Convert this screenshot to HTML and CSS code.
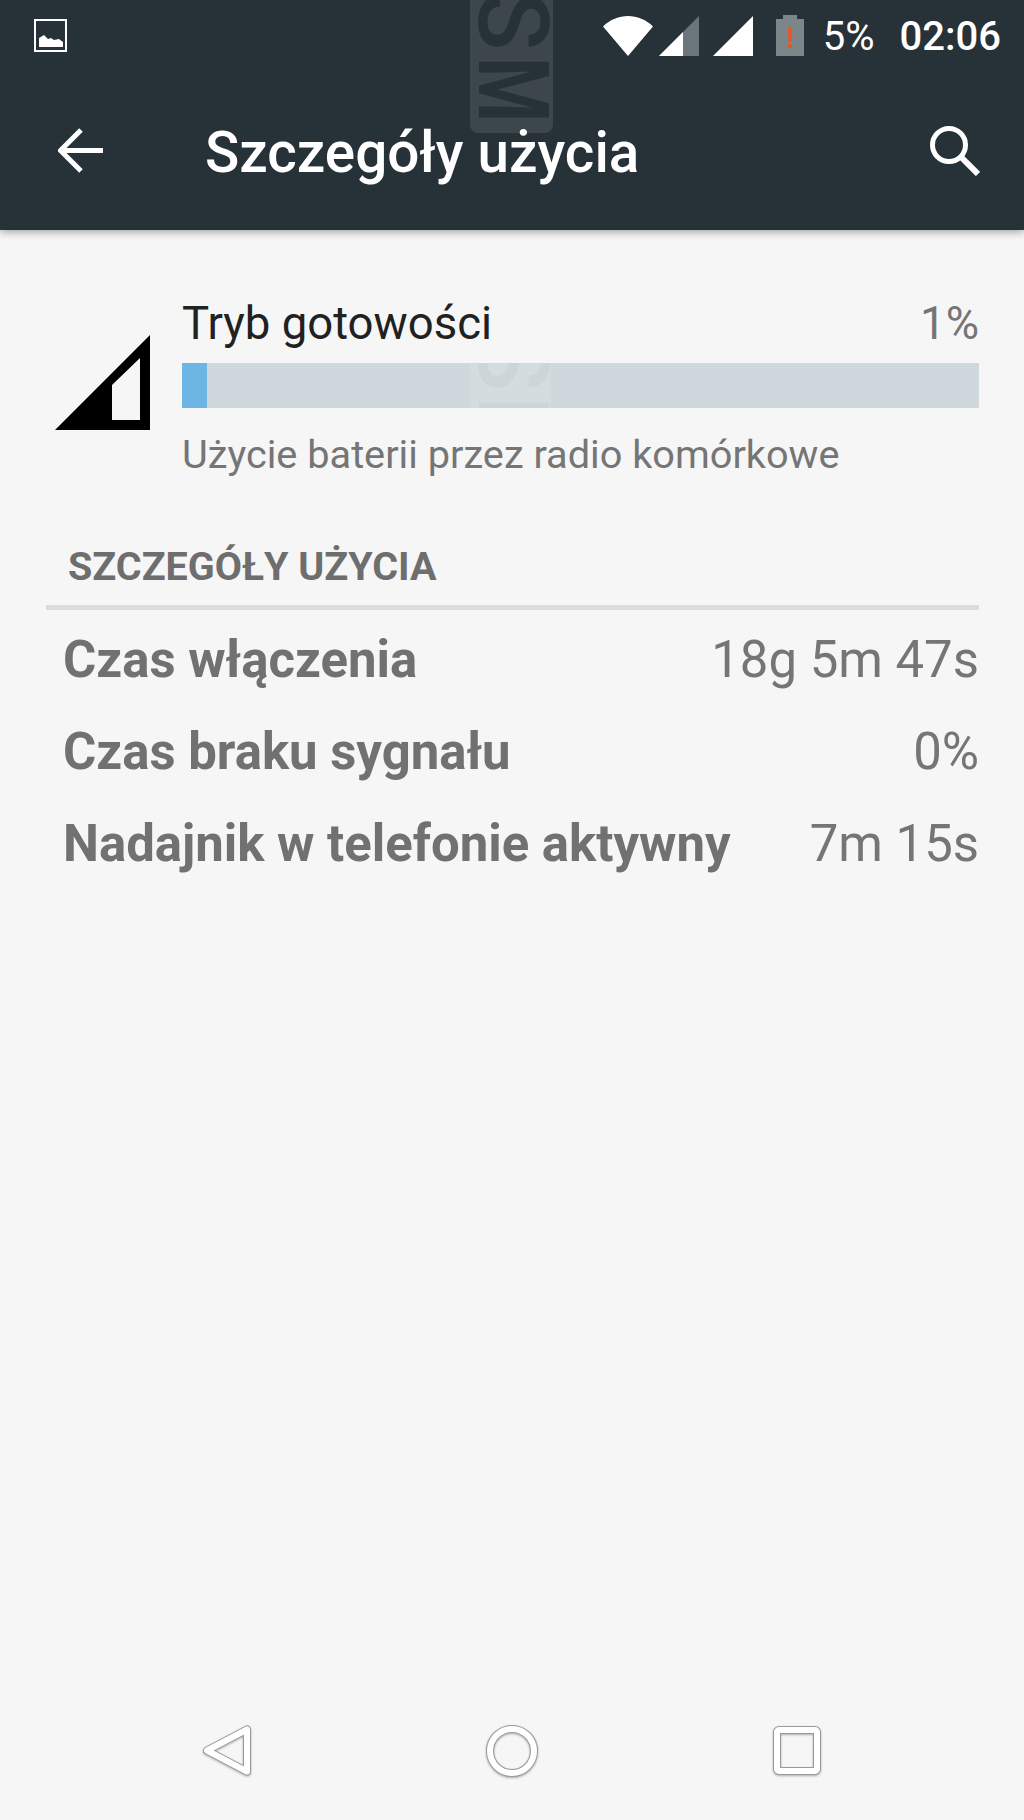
FILE: index.html
```html
<!DOCTYPE html>
<html lang="pl">
<head>
    <meta charset="UTF-8">
    <meta name="viewport" content="width=device-width, initial-scale=1.0">
    <title>Szczegóły użycia</title>
    <link rel="stylesheet" href="styles.css">
</head>
<body>
    <header class="app-header">
        <!-- Znak wodny -->
        <div class="mark"><span class="mark-s">S</span><span class="mark-m">M</span></div>

        <div class="status-bar">
            <svg class="status-image" width="33" height="33" viewBox="0 0 33 33">
                <rect x="1" y="1" width="31" height="31" fill="none" stroke="#fff" stroke-width="2"/>
                <path d="M5 28V19L10 16L14 20L17 19L20 21L25 20L29 23V28Z" fill="#fff"/>
            </svg>
            <div class="status-right">
                <svg class="status-wifi" width="50" height="40" viewBox="0 0 50 40">
                    <path d="M0 10.500C14 -3.500 36 -3.500 50 10.500L25 40Z" fill="#fff"/>
                </svg>
                <svg class="status-signal" width="40" height="40" viewBox="0 0 40 40">
                    <path d="M0 40L40 0V40Z" fill="#6b757b"/>
                    <path d="M0 40L24 16V40Z" fill="#fff"/>
                </svg>
                <svg class="status-signal-full" width="40" height="40" viewBox="0 0 40 40">
                    <path d="M0 40L40 0V40Z" fill="#fff"/>
                </svg>
                <svg class="status-battery" width="28" height="41" viewBox="0 0 28 41">
                    <path d="M7 0H21V4H28V41H0V4H7Z" fill="#7c8588"/>
                    <path d="M12 12H16L15.500 27H12.500Z" fill="#f4511e"/>
                    <rect x="12" y="29" width="4" height="4" fill="#f4511e"/>
                </svg>
                <span class="status-percent">5%</span>
                <span class="status-time">02:06</span>
            </div>
        </div>

        <div class="toolbar">
            <svg class="toolbar-back" width="45" height="45" viewBox="0 0 45 45">
                <path d="M45 22.500H4M23 2L2.500 22.500L23 43" fill="none" stroke="#fff" stroke-width="5"/>
            </svg>
            <h1 class="toolbar-title">Szczegóły użycia</h1>
            <svg class="toolbar-search" width="50" height="50" viewBox="0 0 50 50">
                <circle cx="19" cy="19" r="16.500" fill="none" stroke="#fff" stroke-width="5"/>
                <path d="M31 31L48 48" fill="none" stroke="#fff" stroke-width="6"/>
            </svg>
        </div>
    </header>

    <main class="content">
        <section class="usage">
            <svg class="usage-icon" width="95" height="95" viewBox="0 0 95 95">
                <path d="M0 95L95 0V95Z" fill="#000"/>
                <path d="M57 50L85 23V85H57Z" fill="#f6f6f6"/>
            </svg>
            <div class="usage-info">
                <div class="usage-head">
                    <span class="usage-name">Tryb gotowości</span>
                    <span class="usage-percent">1%</span>
                </div>
                <div class="bar">
                    <div class="bar-fill" style="width: 25px"></div>
                    <div class="mark mark-ghost"><span class="mark-s">S</span><span class="mark-m">M</span></div>
                </div>
                <p class="usage-desc">Użycie baterii przez radio komórkowe</p>
            </div>
        </section>

        <h2 class="section-title">SZCZEGÓŁY UŻYCIA</h2>
        <div class="details">
            <div class="detail-row">
                <span class="detail-label">Czas włączenia</span>
                <span class="detail-value">18g 5m 47s</span>
            </div>
            <div class="detail-row">
                <span class="detail-label">Czas braku sygnału</span>
                <span class="detail-value">0%</span>
            </div>
            <div class="detail-row">
                <span class="detail-label">Nadajnik w telefonie aktywny</span>
                <span class="detail-value">7m 15s</span>
            </div>
        </div>
    </main>

    <!-- Przyciski nawigacji -->
    <nav class="nav-bar">
        <svg class="nav-icon" width="48" height="52" viewBox="0 0 48 52">
            <path d="M44 4.500V46.500L4 25.500Z" fill="none" stroke="#9a9a9a" stroke-width="8" stroke-linejoin="round"/>
            <path d="M44 4.500V46.500L4 25.500Z" fill="none" stroke="#fff" stroke-width="6" stroke-linejoin="round"/>
        </svg>
        <svg class="nav-icon" width="52" height="52" viewBox="0 0 52 52">
            <circle cx="26" cy="26" r="22" fill="none" stroke="#9a9a9a" stroke-width="8"/>
            <circle cx="26" cy="26" r="22" fill="none" stroke="#fff" stroke-width="6"/>
        </svg>
        <svg class="nav-icon" width="48" height="50" viewBox="0 0 48 50">
            <rect x="4" y="4" width="40" height="41" rx="2" fill="none" stroke="#9a9a9a" stroke-width="8"/>
            <rect x="4" y="4" width="40" height="41" rx="2" fill="none" stroke="#fff" stroke-width="6"/>
        </svg>
    </nav>
</body>
</html>
```

FILE: styles.css
```css
html, body {
    margin: 0;
    height: 100%;
}

body {
    display: flex;
    flex-direction: column;
    height: 1820px;
    overflow: hidden;
    background-color: #f6f6f6;
    font-family: 'Roboto', 'Liberation Sans', sans-serif;
}

svg {
    display: block;
    flex-shrink: 0;
}

/* Nagłówek */
.app-header {
    position: relative;
    background-color: #263238;
    box-shadow: 0 2px 8px rgba(0, 0, 0, 0.35);
}

.mark {
    position: absolute;
    top: 0;
    left: 470px;
    width: 83px;
    height: 133px;
    background-color: rgba(255, 255, 255, 0.1);
    border-radius: 0 0 8px 8px;
    color: #263238;
}

.mark-s,
.mark-m {
    position: absolute;
    left: -7px;
    writing-mode: vertical-rl;
    transform-origin: top;
    font-size: 98px;
    font-weight: 500;
    line-height: 98px;
}

.mark-s {
    top: -9px;
}

.mark-m {
    top: 57px;
    font-weight: 700;
    transform: scaleY(0.76);
}

.mark-ghost {
    top: -22px;
    left: 288px;
    width: 81px;
    background-color: rgba(255, 255, 255, 0.1);
    color: #ccd6da;
}

.status-bar {
    position: relative;
    display: flex;
    align-items: center;
    justify-content: space-between;
    height: 71px;
    padding: 0 23px 0 34px;
}

.status-right {
    display: flex;
    align-items: center;
    color: #fff;
    font-size: 40px;
}

.status-signal {
    margin-left: 6px;
}

.status-signal-full {
    margin-left: 14px;
}

.status-battery {
    margin-left: 23px;
}

.status-percent {
    margin-left: 19px;
    padding-top: 2px;
}

.status-time {
    margin-left: 25px;
    padding-top: 2px;
    font-weight: 500;
}

.toolbar {
    position: relative;
    display: flex;
    align-items: center;
    height: 159px;
    padding: 0 44px 0 58px;
}

.toolbar-title {
    flex: 1;
    margin: 4px 0 0 102px;
    font-size: 56.600px;
    font-weight: 500;
    color: #fff;
}

/* Zużycie */
.content {
    padding: 0 45px 0 46px;
}

.usage {
    display: flex;
    padding: 68px 0 0 9px;
}

.usage-icon {
    margin: 37px 32px 0 0;
}

.usage-info {
    flex: 1;
}

.usage-head {
    display: flex;
    justify-content: space-between;
    line-height: 52px;
    font-size: 45.500px;
}

.usage-name {
    color: #212121;
}

.usage-percent {
    color: #757575;
}

.bar {
    position: relative;
    height: 45px;
    margin-top: 13px;
    overflow: hidden;
    background-color: #cfd8dc;
}

.bar-fill {
    height: 100%;
    background-color: #6db6e4;
}

.usage-desc {
    margin: 23px 0 0;
    line-height: 48px;
    font-size: 39.700px;
    color: #757575;
}

.section-title {
    margin: 64px 0 0;
    padding: 0 0 14px 22px;
    border-bottom: 5px solid #dcdcdc;
    line-height: 48px;
    font-size: 39.500px;
    font-weight: 700;
    color: #6e6e6e;
}

.details {
    padding: 4px 0 0 17px;
}

.detail-row {
    display: flex;
    justify-content: space-between;
    line-height: 92px;
    font-size: 50.900px;
    color: #757575;
}

.detail-label {
    font-weight: 700;
    color: #717171;
}

/* Nawigacja */
.nav-bar {
    display: flex;
    align-items: center;
    justify-content: center;
    gap: 235px;
    height: 138px;
    margin-top: auto;
}

.nav-icon {
    filter: drop-shadow(0 1px 1px rgba(0, 0, 0, 0.3));
}
```
